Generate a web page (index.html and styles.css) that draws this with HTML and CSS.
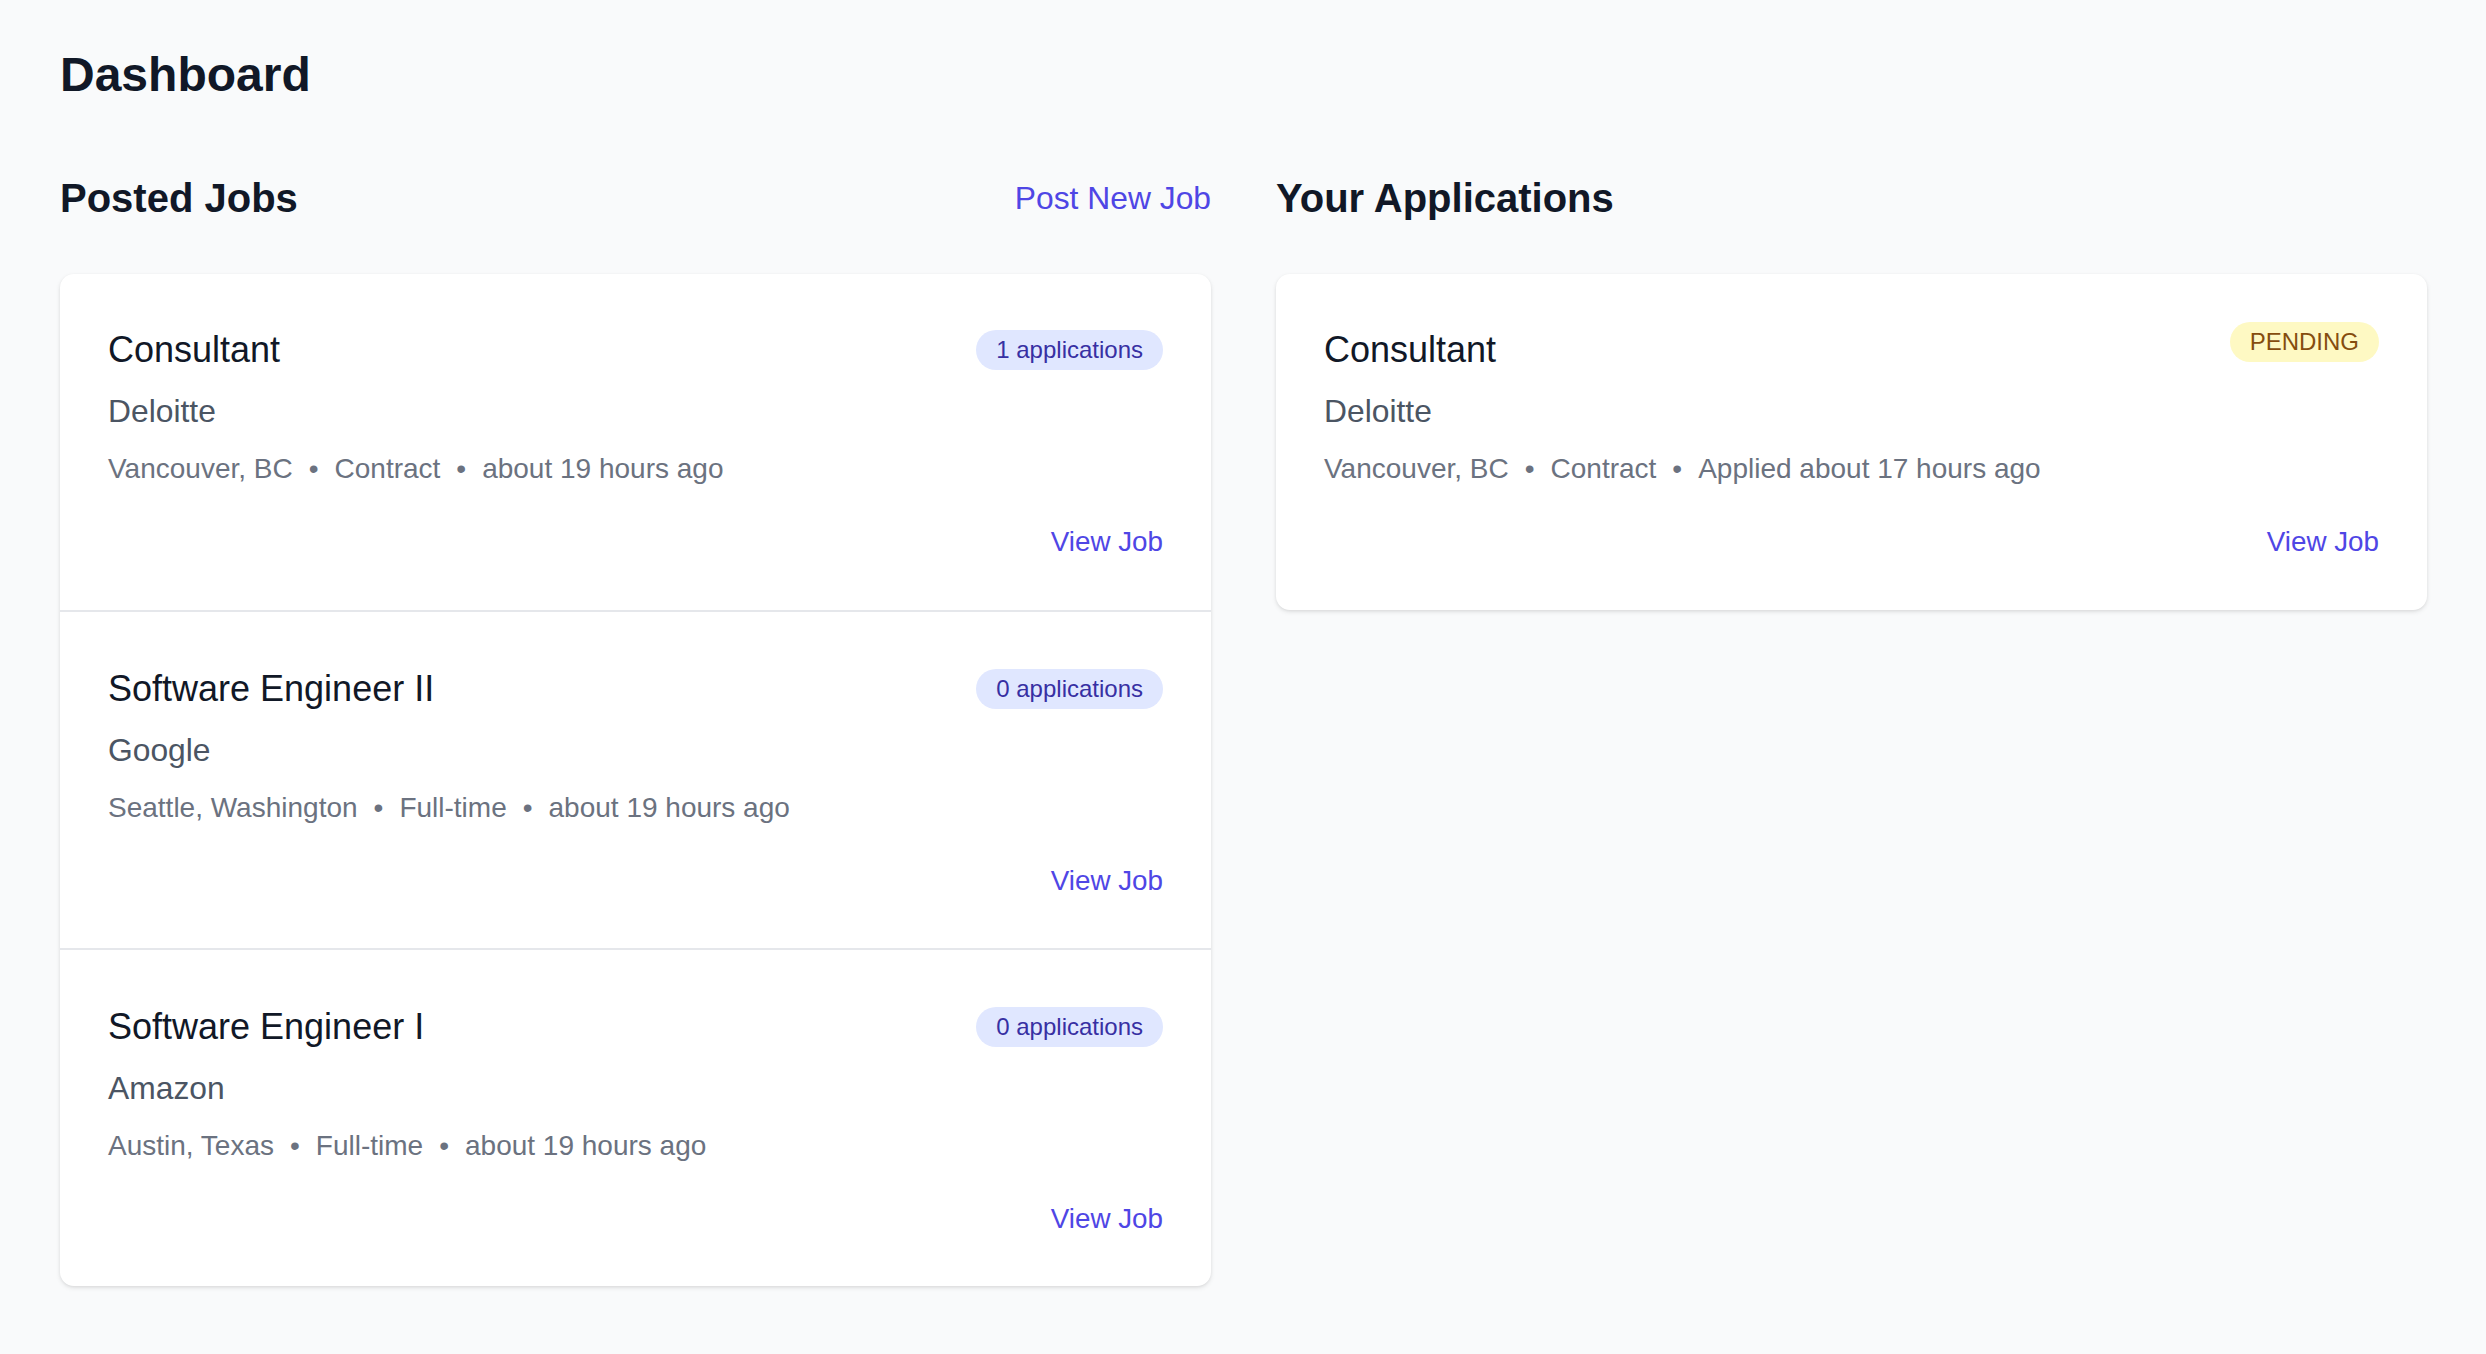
FILE: index.html
```html
<!DOCTYPE html>
<html lang="en">
<head>
<meta charset="utf-8">
<title>Dashboard</title>
<link rel="stylesheet" href="styles.css">
</head>
<body>
<main class="page">
  <h1 class="page-title">Dashboard</h1>
  <div class="columns">
    <section class="column">
      <div class="section-head">
        <h2 class="section-title">Posted Jobs</h2>
        <a class="head-link" href="#">Post New Job</a>
      </div>
      <div class="card">
        <div class="item">
          <div class="item-top">
            <h3 class="job-title">Consultant</h3>
            <span class="badge badge-apps">1 applications</span>
          </div>
          <p class="company">Deloitte</p>
          <p class="meta">Vancouver, BC<span class="dot">•</span>Contract<span class="dot">•</span>about 19 hours ago</p>
          <div class="item-actions"><a class="view-link" href="#">View Job</a></div>
        </div>
        <div class="item">
          <div class="item-top">
            <h3 class="job-title">Software Engineer II</h3>
            <span class="badge badge-apps">0 applications</span>
          </div>
          <p class="company">Google</p>
          <p class="meta">Seattle, Washington<span class="dot">•</span>Full-time<span class="dot">•</span>about 19 hours ago</p>
          <div class="item-actions"><a class="view-link" href="#">View Job</a></div>
        </div>
        <div class="item">
          <div class="item-top">
            <h3 class="job-title">Software Engineer I</h3>
            <span class="badge badge-apps">0 applications</span>
          </div>
          <p class="company">Amazon</p>
          <p class="meta">Austin, Texas<span class="dot">•</span>Full-time<span class="dot">•</span>about 19 hours ago</p>
          <div class="item-actions"><a class="view-link" href="#">View Job</a></div>
        </div>
      </div>
    </section>
    <section class="column">
      <div class="section-head">
        <h2 class="section-title">Your Applications</h2>
      </div>
      <div class="card">
        <div class="item">
          <div class="item-top item-top-start">
            <h3 class="job-title">Consultant</h3>
            <span class="badge badge-pending">PENDING</span>
          </div>
          <p class="company">Deloitte</p>
          <p class="meta">Vancouver, BC<span class="dot">•</span>Contract<span class="dot">•</span>Applied about 17 hours ago</p>
          <div class="item-actions"><a class="view-link" href="#">View Job</a></div>
        </div>
      </div>
    </section>
  </div>
</main>
</body>
</html>
```

FILE: styles.css
```css
* { box-sizing: border-box; }

html, body {
  margin: 0;
  padding: 0;
  background: #f9fafb;
}

body {
  font-family: "Liberation Sans", Arial, Helvetica, sans-serif;
  color: #111827;
}

.page {
  padding: 47px 59px 60px 60px;
}

.page-title {
  margin: 0;
  font-size: 48px;
  line-height: 56px;
  font-weight: 700;
  color: #111827;
}

.columns {
  display: grid;
  grid-template-columns: 1fr 1fr;
  column-gap: 65px;
  margin-top: 67px;
  align-items: start;
}

.section-head {
  display: flex;
  align-items: center;
  justify-content: space-between;
  height: 56px;
  margin-bottom: 48px;
}

.section-title {
  margin: 0;
  font-size: 40px;
  line-height: 56px;
  font-weight: 700;
  color: #111827;
}

.head-link {
  font-size: 31.8px;
  line-height: 44px;
  color: #4f46e5;
  text-decoration: none;
}

.card {
  background: #ffffff;
  border-radius: 14px;
  box-shadow: 0 2px 5px rgba(0, 0, 0, 0.09), 0 1px 3px rgba(0, 0, 0, 0.06);
  overflow: hidden;
}

.item {
  padding: 49px 48px 48px 48px;
  height: 338px;
  border-top: 2px solid #e5e7eb;
}

.item:first-child {
  border-top: none;
  padding-top: 48px;
  height: 336px;
}

.item-top {
  display: flex;
  align-items: center;
  justify-content: space-between;
}

.item-top-start {
  align-items: flex-start;
}

.job-title {
  margin: 0;
  font-size: 36px;
  line-height: 56px;
  font-weight: 400;
  color: #111827;
}

.badge {
  display: inline-block;
  height: 40px;
  line-height: 40px;
  padding: 0 20px;
  border-radius: 999px;
  font-size: 24px;
  white-space: nowrap;
}

.badge-apps {
  background: #e0e7ff;
  color: #3730a3;
}

.badge-pending {
  background: #fef9c3;
  color: #854d0e;
}

.company {
  margin: 11px 0 0;
  font-size: 31.8px;
  line-height: 44px;
  color: #4b5563;
}

.meta {
  margin: 16px 0 0;
  font-size: 28px;
  line-height: 40px;
  color: #6b7280;
}

.dot {
  margin: 0 16px;
}

.item-actions {
  display: flex;
  justify-content: flex-end;
  margin-top: 33px;
}

.view-link {
  font-size: 27.8px;
  line-height: 40px;
  color: #4f46e5;
  text-decoration: none;
}
```
